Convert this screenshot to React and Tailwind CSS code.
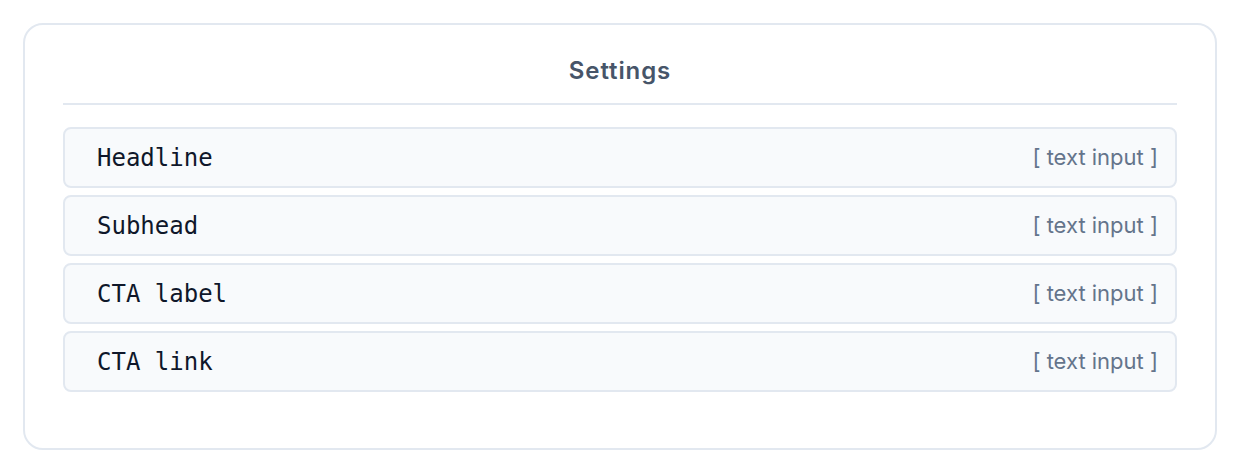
export default function App() {
  const rows = ["Headline", "Subhead", "CTA label", "CTA link"];
  return (
    <div className="w-[1240px] h-[472px] bg-white pt-[23px] pl-[23px]">
      <div className="w-[1194px] h-[427px] border-2 border-[#e2e8f0] rounded-[20px] px-[38px] pt-[29px]">
        <div className="text-center text-[24px] leading-[34px] font-semibold tracking-[0.9px] text-[#475569]" style={{ fontFamily: "Inter, 'Noto Sans', sans-serif" }}>
          Settings
        </div>
        <div className="mt-[15px] h-[2px] bg-[#e2e8f0]" />
        <div className="mt-[22px] flex flex-col gap-[7px]">
          {rows.map((r) => (
            <div key={r} className="h-[61px] border-2 border-[#e2e8f0] rounded-[8px] bg-[#f8fafc] flex items-center justify-between pl-[32px] pr-[17px]">
              <span className="text-[24px] text-[#0f172a]" style={{ fontFamily: "'DejaVu Sans Mono', monospace" }}>{r}</span>
              <span className="text-[22px] text-[#64748b]" style={{ fontFamily: "Inter, 'Noto Sans', sans-serif" }}>[ text input ]</span>
            </div>
          ))}
        </div>
      </div>
    </div>
  );
}
